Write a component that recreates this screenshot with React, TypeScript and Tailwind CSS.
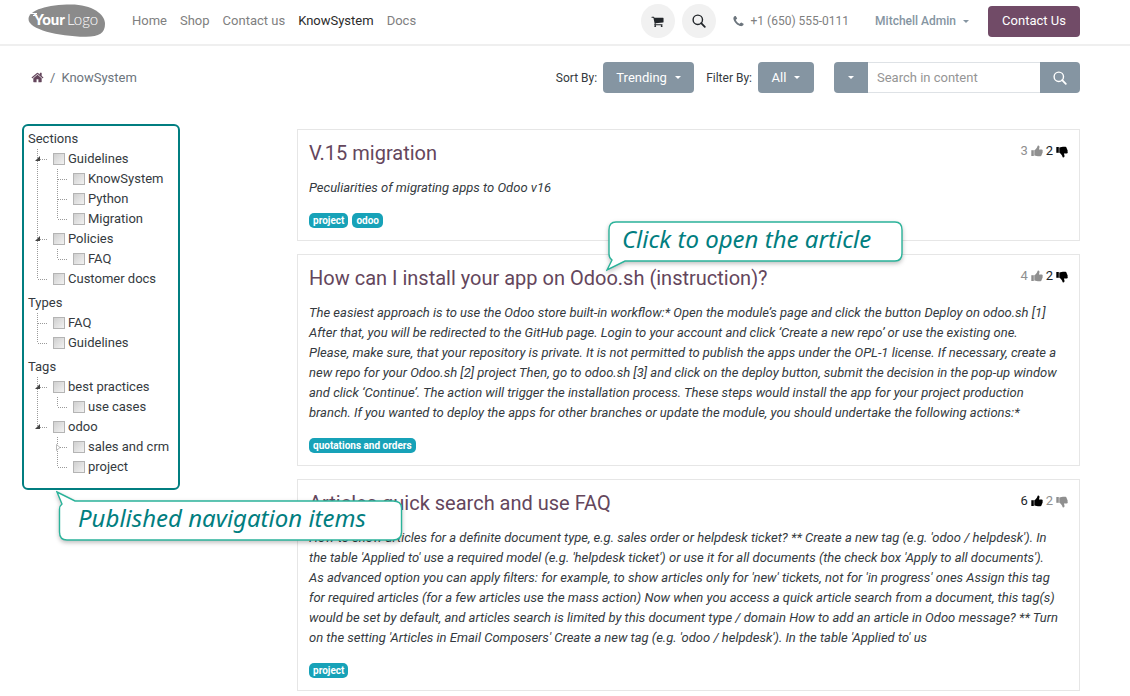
import React from "react";

const HOME =
  "M1472 992v480q0 26-19 45t-45 19h-384v-384h-256v384h-384q-26 0-45-19t-19-45v-480q0-1 .5-3t.5-3l575-474 575 474q1 2 1 6zm223-69l-62 74q-8 9-21 11h-3q-13 0-21-7l-692-577-692 577q-12 8-24 7-13-2-21-11l-62-74q-8-10-7-23.5t11-21.5l719-599q32-26 76-26t76 26l244 204v-195q0-14 9-23t23-9h192q14 0 23 9t9 23v408l219 182q10 8 11 21.5t-7 23.5z";
const PHONE =
  "M1600 1240q0 27-10 70.5t-21 68.5q-21 50-122 106-94 51-186 51-27 0-52.5-3.5t-57.5-12.5-47.5-14.5-55.5-20.5-49-18q-98-35-175-83-128-79-264.5-215.5t-215.5-264.5q-48-77-83-175-3-9-18-49t-20.5-55.5-14.5-47.5-12.5-57.5-3.5-52.5q0-92 51-186 56-101 106-122 25-11 68.5-21t70.5-10q14 0 21 3 18 6 53 76 11 19 30 54t35 63.5 31 53.5q3 4 17.5 25t21.5 35.5 7 28.5q0 20-28.5 50t-62 55-62 53-28.5 46q0 9 5 22.5t8.5 20.5 14 24 11.5 19q76 137 174 235t235 174q2 1 19 11.5t24 14 20.5 8.5 22.5 5q18 0 46-28.5t53-62 55-62 50-28.5q14 0 28.5 7t35.5 21.5 25 17.5q25 15 53.5 31t63.5 35 54 30q70 35 76 53 3 7 3 21z";
const CART =
  "M704 1536q0 52-38 90t-90 38-90-38-38-90 38-90 90-38 90 38 38 90zm896 0q0 52-38 90t-90 38-90-38-38-90 38-90 90-38 90 38 38 90zm128-1088v512q0 24-16.5 42.5t-40.5 21.5l-1044 122q13 60 13 70 0 16-24 64h920q26 0 45 19t19 45-19 45-45 19h-1024q-26 0-45-19t-19-45q0-11 8-31.5t16-36 21.5-40 15.5-29.5l-177-823h-204q-26 0-45-19t-19-45 19-45 45-19h256q16 0 28.5 6.5t19.5 15.5 13 24.5 8 26 5.5 29.5 4.5 26h1201q26 0 45 19t19 45z";

function Glyph({ d, className }: { d: string; className: string }) {
  return (
    <svg viewBox="0 0 1792 1792" className={className} fill="currentColor" aria-hidden="true">
      <path d={d} />
    </svg>
  );
}

function Thumb({ down }: { down?: boolean }) {
  return (
    <svg viewBox="0 0 12 12" className={down ? "mt-[2px] size-3 -scale-y-100" : "size-3"} fill="currentColor" aria-hidden="true">
      <path d="M0.300 5.200H2.800V11H0.300Z" />
      <path d="M3.300 5.200C4.600 4.800 5.300 3.400 6 2.500C6.500 1.800 6.300 0.500 7.200 0.400C8.500 0.400 8.700 1.700 8.400 2.700L7.900 4.400H10.600C11.800 4.400 12 5.600 11.500 6.200C11.900 6.800 11.800 7.600 11.200 8C11.400 8.700 11.100 9.300 10.700 9.500C10.800 10.700 10 11.300 8.800 11.300C6.500 11.400 5 10.700 3.300 10.500Z" />
    </svg>
  );
}

function SearchGlyph() {
  return (
    <svg viewBox="0 0 14 14" className="size-[14px]" fill="none" stroke="currentColor" aria-hidden="true">
      <circle cx="5.8" cy="5.8" r="4.7" strokeWidth="1.4" />
      <path d="M9.2 9.2 L12.8 12.8" strokeWidth="1.8" strokeLinecap="round" />
    </svg>
  );
}

function Caret() {
  return (
    <svg viewBox="0 0 6 3" className="h-[3px] w-[6px]" fill="currentColor" aria-hidden="true">
      <path d="M0 0H6L3 3Z" />
    </svg>
  );
}

function Logo() {
  return (
    <svg viewBox="0 0 78 34" className="h-[34px] w-[78px]" role="img" aria-label="Your Logo">
      <path
        d="M0.500 15C0.500 6 20 0.500 43 0.500C64 0.500 77 10 77 20C77 29 71 33 57 32.800C30 32.300 0.500 25.500 0.500 15Z"
        fill="#8b8b8b"
      />
      <path d="M3 9.500H9M5 11.500H9" stroke="#fff" strokeWidth="1.200" />
      <text x="6" y="21" fill="#fff" fontFamily="Lato, sans-serif" fontSize="15" fontWeight="900">
        Your
      </text>
      <text x="39" y="21" fill="#fff" fontFamily="Lato, sans-serif" fontSize="15" fontWeight="300">
        Logo
      </text>
    </svg>
  );
}

type Link = "tee" | "elbow" | "line" | "blank";
type Node = { label: string; children?: Node[]; folded?: boolean };

function Connector({ kind, open, folded }: { kind: Link; open?: boolean; folded?: boolean }) {
  return (
    <svg viewBox="0 0 20 20" className="size-5 shrink-0" fill="none" stroke="#9a9a9a" strokeDasharray="1 1" aria-hidden="true">
      {(kind === "tee" || kind === "line") && <path d="M9.500 0V20" />}
      {kind === "elbow" && <path d="M9.500 0V10" />}
      {(kind === "tee" || kind === "elbow") && <path d="M10 10.500H20" />}
      {open && <path d="M12 7V12H7Z" fill="#444" stroke="none" />}
      {folded && <path d="M8.500 7.500L12 10.500L8.500 13.500Z" fill="#fff" stroke="#aaa" strokeDasharray="none" strokeWidth="0.8" />}
    </svg>
  );
}

function Tree({ nodes, path, trail }: { nodes: Node[]; path: string; trail: Link[] }) {
  return (
    <ul>
      {nodes.map((node, i) => {
        const last = i === nodes.length - 1;
        const id = `${path}-${i}`;
        return (
          <li key={id}>
            <div className="flex h-5 items-center">
              {trail.map((kind, k) => (
                <Connector key={k} kind={kind} />
              ))}
              <Connector kind={last ? "elbow" : "tee"} open={!!node.children} folded={node.folded} />
              <input
                id={id}
                type="checkbox"
                className="ml-[5px] size-3 shrink-0 appearance-none border border-[#b4b4b4] bg-linear-to-br from-[#cfcfcf] to-[#f2f2f2] checked:bg-[#8595a2]"
              />
              <label htmlFor={id} className="pl-[3px] whitespace-nowrap">
                {node.label}
              </label>
            </div>
            {node.children && <Tree nodes={node.children} path={id} trail={[...trail, last ? "blank" : "line"]} />}
          </li>
        );
      })}
    </ul>
  );
}

const groups: { title: string; nodes: Node[] }[] = [
  {
    title: "Sections",
    nodes: [
      { label: "Guidelines", children: [{ label: "KnowSystem" }, { label: "Python" }, { label: "Migration" }] },
      { label: "Policies", children: [{ label: "FAQ" }] },
      { label: "Customer docs" },
    ],
  },
  { title: "Types", nodes: [{ label: "FAQ" }, { label: "Guidelines" }] },
  {
    title: "Tags",
    nodes: [
      { label: "best practices", children: [{ label: "use cases" }] },
      { label: "odoo", children: [{ label: "sales and crm", folded: true }, { label: "project" }] },
    ],
  },
];

type Article = { title: string; text: string; tags: string[]; up: number; down: number; liked: boolean };

const articles: Article[] = [
  {
    title: "V.15 migration",
    text: "Peculiarities of migrating apps to Odoo v16",
    tags: ["project", "odoo"],
    up: 3,
    down: 2,
    liked: false,
  },
  {
    title: "How can I install your app on Odoo.sh (instruction)?",
    text: "The easiest approach is to use the Odoo store built-in workflow:* Open the module’s page and click the button Deploy on odoo.sh [1] After that, you will be redirected to the GitHub page. Login to your account and click ‘Create a new repo’ or use the existing one. Please, make sure, that your repository is private. It is not permitted to publish the apps under the OPL-1 license. If necessary, create a new repo for your Odoo.sh [2] project Then, go to odoo.sh [3] and click on the deploy button, submit the decision in the pop-up window and click ‘Continue’. The action will trigger the installation process. These steps would install the app for your project production branch. If you wanted to deploy the apps for other branches or update the module, you should undertake the following actions:*",
    tags: ["quotations and orders"],
    up: 4,
    down: 2,
    liked: false,
  },
  {
    title: "Articles quick search and use FAQ",
    text: "How to show articles for a definite document type, e.g. sales order or helpdesk ticket? ** Create a new tag (e.g. 'odoo / helpdesk'). In the table 'Applied to' use a required model (e.g. 'helpdesk ticket') or use it for all documents (the check box 'Apply to all documents'). As advanced option you can apply filters: for example, to show articles only for 'new' tickets, not for 'in progress' ones Assign this tag for required articles (for a few articles use the mass action) Now when you access a quick article search from a document, this tag(s) would be set by default, and articles search is limited by this document type / domain How to add an article in Odoo message? ** Turn on the setting 'Articles in Email Composers' Create a new tag (e.g. 'odoo / helpdesk'). In the table 'Applied to' us",
    tags: ["project"],
    up: 6,
    down: 2,
    liked: true,
  },
];

function ArticleCard({ article, children }: { article: Article; children?: React.ReactNode }) {
  const on = "text-black";
  const off = "text-[#8f8f8f]";
  return (
    <article className="relative border border-[#e6e6e6] px-[11px] pt-[11px] pb-3">
      <div className="flex items-start justify-between">
        <h2 className="text-[20px] leading-6 text-[#64465c]">
          <a href="#article">{article.title}</a>
        </h2>
        <div className="flex items-center gap-[3px] text-[13px] leading-5">
          <span className={article.liked ? "text-[#212529]" : off}>{article.up}</span>
          <button type="button" aria-label="Like" className={article.liked ? on : off}>
            <Thumb />
          </button>
          <span className={article.liked ? off : "text-[#212529]"}>{article.down}</span>
          <button type="button" aria-label="Dislike" className={article.liked ? off : on}>
            <Thumb down />
          </button>
        </div>
      </div>
      <p className="mt-[13px] pr-2 text-[13px] leading-5 italic">{article.text}</p>
      <ul className="mt-[15px] flex gap-1">
        {article.tags.map((tag) => (
          <li key={tag} className="rounded-[5px] bg-[#17a2b8] px-1 text-[10px] leading-[15px] font-bold text-white">
            {tag}
          </li>
        ))}
      </ul>
      {children}
    </article>
  );
}

const links = ["Home", "Shop", "Contact us", "KnowSystem", "Docs"];

export default function App() {
  return (
    <div className="min-h-screen bg-white font-['Roboto',sans-serif] text-[13px] text-[#343a40]">
      <header className="flex h-[46px] items-center border-b-2 border-[#efefef] pr-[50px] pl-7">
        <a href="#home" className="mt-[-3px]">
          <Logo />
        </a>
        <nav className="flex flex-1 gap-[13px] pb-[2px] pl-[26px] leading-5 text-[#808080]">
          {links.map((l) => (
            <a key={l} href="#nav" className={l === "KnowSystem" ? "text-[#2b2b2b]" : ""}>
              {l}
            </a>
          ))}
        </nav>
        <div className="flex items-center pb-[2px]">
          <button type="button" aria-label="Cart" className="grid size-[34px] place-items-center rounded-full bg-[#f1f1f1] text-[#212529]">
            <Glyph d={CART} className="size-[13px]" />
          </button>
          <button type="button" aria-label="Search" className="ml-[7px] grid size-[34px] place-items-center rounded-full bg-[#f1f1f1] text-[#212529]">
            <SearchGlyph />
          </button>
          <a href="tel:+16505550111" className="ml-4 flex items-center gap-[6px] text-[12px] text-[#808080]">
            <Glyph d={PHONE} className="size-[13px] text-[#6c757d]" />
            +1 (650) 555-0111
          </a>
          <button type="button" className="ml-[26px] flex items-center gap-[7px] text-[12px] font-medium text-[#8595a2]">
            Mitchell Admin
            <Caret />
          </button>
          <button type="button" className="ml-[19px] h-[31px] w-[92px] rounded bg-[#714b67] text-white">
            Contact Us
          </button>
        </div>
      </header>

      <div className="flex items-center pt-4 pr-[50px] pl-[31px]">
        <nav aria-label="Breadcrumb" className="flex flex-1 items-center gap-[6px] text-[#6c757d]">
          <a href="#home" aria-label="Home" className="text-[#64465c]">
            <Glyph d={HOME} className="size-[13px]" />
          </a>
          <span>/</span>
          <span>KnowSystem</span>
        </nav>
        <span className="text-[12px]">Sort By:</span>
        <button type="button" className="ml-[6px] flex h-[31px] w-[91px] items-center justify-center gap-2 rounded bg-[#8595a2] text-white">
          Trending
          <Caret />
        </button>
        <span className="ml-[12px] text-[12px]">Filter By:</span>
        <button type="button" className="ml-[6px] flex h-[31px] w-14 items-center justify-center gap-2 rounded bg-[#8595a2] text-white">
          All
          <Caret />
        </button>
        <form className="ml-5 flex h-[31px]">
          <button type="button" aria-label="Search options" className="grid w-[34px] place-items-center rounded-l bg-[#8595a2] text-white">
            <Caret />
          </button>
          <input
            type="search"
            aria-label="Search in content"
            placeholder="Search in content"
            className="w-[172px] border-y border-[#dee2e6] px-[9px] outline-none placeholder:text-[#959595]"
          />
          <button type="submit" aria-label="Search" className="grid w-10 place-items-center rounded-r bg-[#8595a2] text-white">
            <SearchGlyph />
          </button>
        </form>
      </div>

      <div className="grid grid-cols-[158px_1fr] items-start gap-x-[117px] pt-[31px] pr-[50px] pl-[22px]">
        <aside className="relative rounded-md border-2 border-[#017e80] px-1 pt-[3px] pb-[11px]">
          <div className="flex flex-col gap-1">
            {groups.map((g) => (
              <section key={g.title}>
                <h3 className="leading-5">{g.title}</h3>
                <Tree nodes={g.nodes} path={g.title} trail={[]} />
              </section>
            ))}
          </div>
          <div className="absolute top-[364px] left-8 z-10 h-[52px] w-[348px]">
            <svg viewBox="0 0 348 52" className="absolute inset-0 drop-shadow-[0_2px_2px_rgba(0,0,0,0.25)]" aria-hidden="true">
              <path
                d="M1 2L19 11H337Q345.500 11 345.500 18V42Q345.500 50 337 50H11Q3.500 50 3.500 42V19Q3.500 16 6 14Z"
                fill="#fff"
                stroke="#2bb39a"
                strokeWidth="1.400"
              />
            </svg>
            <p className="relative pt-3 pl-[22px] font-['Noto_Sans',sans-serif] text-[24px] leading-8 whitespace-nowrap text-[#017e80] italic">
              Published navigation items
            </p>
          </div>
        </aside>

        <main className="flex flex-col gap-[13px] pt-[5px]">
          {articles.map((a, i) => (
            <ArticleCard key={a.title} article={a}>
              {i === 1 && (
                <div className="absolute top-[-35px] left-[308px] z-10 h-[52px] w-[300px]">
                  <svg viewBox="0 0 300 52" className="absolute inset-0 drop-shadow-[0_2px_2px_rgba(0,0,0,0.25)]" aria-hidden="true">
                    <path
                      d="M1 50L6 40Q3 38 3 34V10Q3 2 10 2H289Q296 2 296 10V33Q296 41 289 41H19Z"
                      fill="#fff"
                      stroke="#2bb39a"
                      strokeWidth="1.400"
                    />
                  </svg>
                  <p className="relative pt-[3px] pl-4 font-['Noto_Sans',sans-serif] text-[24px] leading-8 whitespace-nowrap text-[#017e80] italic">
                    Click to open the article
                  </p>
                </div>
              )}
            </ArticleCard>
          ))}
        </main>
      </div>
    </div>
  );
}
